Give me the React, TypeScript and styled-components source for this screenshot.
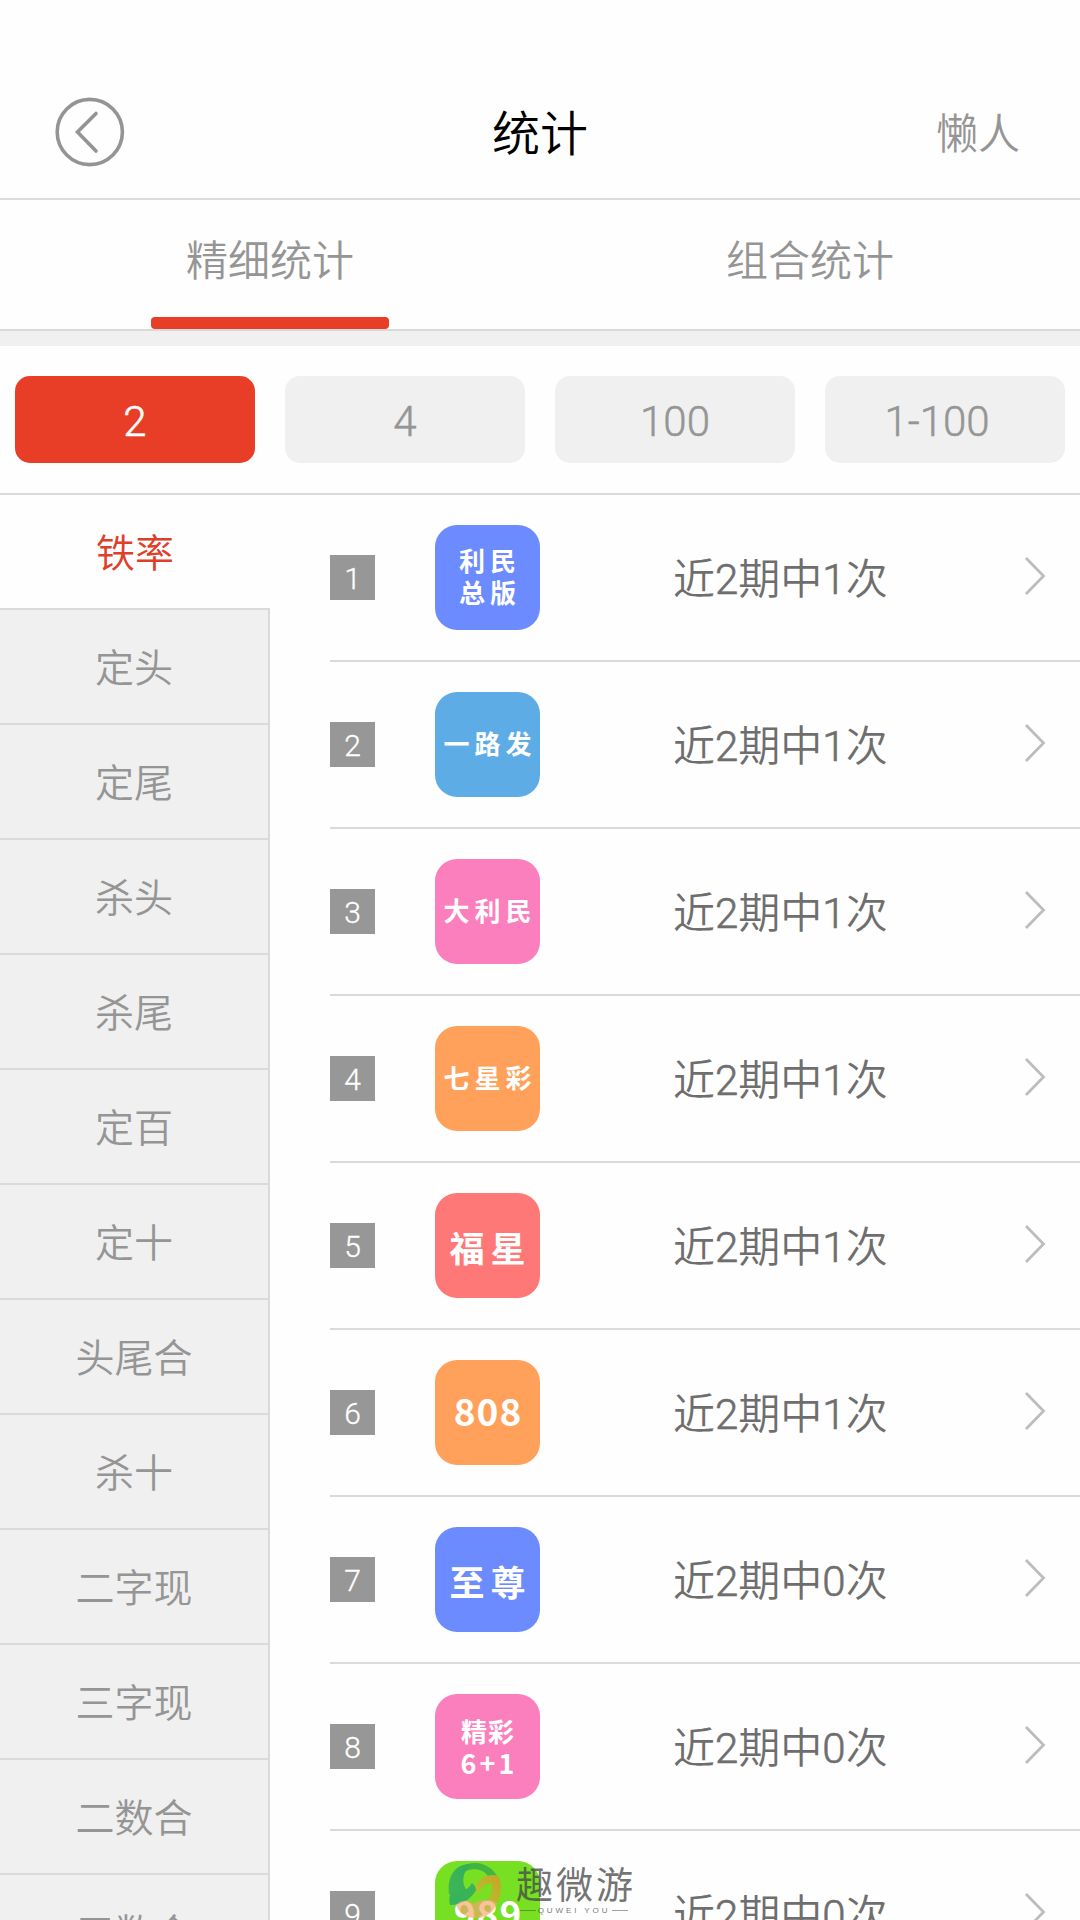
import React from "react";
import styled, { createGlobalStyle } from "styled-components";

const GlobalStyle = createGlobalStyle`
  * { box-sizing: border-box; }
  html, body { margin: 0; padding: 0; background: #fefefe; }
  body { overflow: hidden; font-family: Roboto, "Noto Sans CJK SC", sans-serif; font-weight: 350; }
  button { font: inherit; border: 0; padding: 0; background: none; }
  svg { display: block; }
`;

const Screen = styled.div`
  position: relative;
  display: flex;
  flex-direction: column;
  width: 1080px;
  height: 1920px;
  overflow: hidden;
  background: #fefefe;
`;

const Header = styled.header`
  display: grid;
  grid-template-columns: 1fr auto 1fr;
  align-items: center;
  height: 200px;
  padding: 66px 60px 0;
  border-bottom: 2px solid #dadada;
`;

const BackButton = styled.button`
  justify-self: start;
  width: 72px;
  height: 72px;
  margin-left: -6px;
`;

const Title = styled.h1`
  margin: 0;
  padding-top: 5px;
  font-size: 48px;
  line-height: 72px;
  font-weight: 350;
  color: #000;
`;

const HeaderLink = styled.button`
  justify-self: end;
  padding-top: 5px;
  font-size: 42px;
  line-height: 60px;
  color: #959595;
`;

const Tabs = styled.nav`
  display: flex;
  height: 131px;
  border-bottom: 2px solid #dadada;
`;

const Tab = styled.button`
  flex: 1;
  display: flex;
  flex-direction: column;
  align-items: center;
  justify-content: space-between;
  padding-top: 32px;
  font-size: 42px;
  line-height: 60px;
  color: #959595;
`;

const TabBar = styled.span<{ $on: boolean }>`
  width: 238px;
  height: 12px;
  border-radius: 4px;
  background: ${(p) => (p.$on ? "#e83d26" : "transparent")};
`;

const Band = styled.div`
  height: 15px;
  background: #f0f0f0;
`;

const Periods = styled.div`
  display: grid;
  grid-template-columns: repeat(4, 240px);
  gap: 30px;
  height: 149px;
  padding: 30px 15px;
  border-bottom: 2px solid #dadada;
`;

const Period = styled.button<{ $on: boolean; $shift: number }>`
  height: 87px;
  border-radius: 15px;
  font-size: 42px;
  line-height: 83px;
  padding: 4px ${(p) => p.$shift}px 0 0;
  color: ${(p) => (p.$on ? "#fff" : "#959595")};
  background: ${(p) => (p.$on ? "#e83d26" : "#f0f0f0")};
  -webkit-text-stroke: 0.5px currentColor;
`;

const Body = styled.main`
  display: flex;
  flex: 1;
  min-height: 0;
  overflow: hidden;
`;

const Sidebar = styled.aside`
  flex: 0 0 270px;
`;

const Category = styled.div<{ $on: boolean }>`
  height: 115px;
  padding-top: 2px;
  border-bottom: 2px solid #dadada;
  border-right: ${(p) => (p.$on ? "0" : "2px solid #dadada")};
  background: ${(p) => (p.$on ? "#fefefe" : "#f0f0f0")};
  color: ${(p) => (p.$on ? "#dd3f2a" : "#959595")};
  font-size: 39px;
  line-height: 115px;
  text-align: center;
`;

const List = styled.section`
  flex: 1;
  padding-left: 60px;
`;

const Row = styled.div`
  display: flex;
  align-items: center;
  height: 167px;
  border-bottom: 2px solid #dadada;
`;

const Rank = styled.span`
  width: 45px;
  height: 45px;
  background: #979797;
  color: #fff;
  font-size: 30px;
  line-height: 48px;
  text-align: center;
  -webkit-text-stroke: 0.3px currentColor;
`;

const Tile = styled.div<{ $color: string; $lift: number }>`
  display: flex;
  flex-direction: column;
  align-items: center;
  justify-content: center;
  width: 105px;
  height: 105px;
  margin-left: 60px;
  padding-top: ${(p) => Math.max(0, -p.$lift)}px;
  padding-bottom: ${(p) => Math.max(0, p.$lift)}px;
  border-radius: 22px;
  background: ${(p) => p.$color};
  color: #fff;
  font-family: "Noto Sans CJK SC", sans-serif;
  font-weight: 700;
`;

const TileText = styled.span<{ $size: number; $gap: number }>`
  margin-right: -${(p) => p.$gap}px;
  white-space: pre;
  font-size: ${(p) => p.$size}px;
  line-height: ${(p) => (p.$size > 30 ? 46 : 32)}px;
  letter-spacing: ${(p) => p.$gap}px;
`;

const Result = styled.div`
  width: 216px;
  margin-left: 133px;
  padding-top: 5px;
  white-space: nowrap;
  font-size: 42px;
  line-height: 60px;
  color: #6e6e6e;
`;

const Count = styled.span`
  -webkit-text-stroke: 0.6px currentColor;
`;

const Chevron = styled.svg`
  margin: 0 34px 3px auto;
`;

const Watermark = styled.div`
  position: absolute;
  left: 448px;
  top: 1863px;
  display: flex;
`;

const Brand = styled.div`
  display: flex;
  flex-direction: column;
  margin-left: 14px;
  color: rgba(70, 70, 70, 0.75);
`;

const BrandName = styled.span`
  padding-top: 3px;
  font-size: 37px;
  line-height: 41px;
  letter-spacing: 3px;
  font-weight: 400;
`;

const BrandSub = styled.span`
  display: flex;
  align-items: center;
  gap: 2px;
  width: 108px;
  margin-top: -1px;
  margin-left: 4px;
  font-family: "Liberation Sans", sans-serif;
  font-size: 8px;
  line-height: 9px;
  letter-spacing: 2.9px;
  white-space: nowrap;
  &::before, &::after { content: ""; flex: 1; height: 1px; background: rgba(70, 70, 70, 0.5); }
`;

type Line = { text: string; size: number; gap: number };
type Lottery = { color: string; lines: Line[]; lift: number; hits: number };

const small = (text: string): Line => ({ text, size: 26, gap: 5 });
const large = (text: string): Line => ({ text, size: 35, gap: 6 });
const digits = (text: string): Line => ({ text, size: 37, gap: 1 });

const lotteries: Lottery[] = [
  { color: "#6c8bff", lines: [small("利民"), small("总版")], lift: 4, hits: 1 },
  { color: "#5eace5", lines: [small("一路发")], lift: 3, hits: 1 },
  { color: "#fb7fbd", lines: [small("大利民")], lift: 3, hits: 1 },
  { color: "#ffa15a", lines: [small("七星彩")], lift: 3, hits: 1 },
  { color: "#ff7878", lines: [large("福星")], lift: -2, hits: 1 },
  { color: "#ffa15a", lines: [digits("808")], lift: 5, hits: 1 },
  { color: "#6c8bff", lines: [large("至尊")], lift: -2, hits: 0 },
  {
    color: "#fb7fbd",
    lines: [{ text: "精彩", size: 26, gap: 1 }, { text: "6+1", size: 27, gap: 3 }],
    lift: 0,
    hits: 0,
  },
  { color: "#77e022", lines: [digits("989")], lift: 3, hits: 0 },
];

const categories = ["铁率", "定头", "定尾", "杀头", "杀尾", "定百", "定十", "头尾合", "杀十", "二字现", "三字现", "二数合", "三数合"];
const periods = ["2", "4", "100", "1-100"];
const tabs = ["精细统计", "组合统计"];

function BrandLogo() {
  return (
    <svg width="54" height="57" viewBox="0 0 54 57">
      <defs>
        <linearGradient id="leaf" x1="0" y1="1" x2="1" y2="0">
          <stop offset="0" stopColor="#38b45c" />
          <stop offset="1" stopColor="#2aa566" />
        </linearGradient>
        <linearGradient id="sun" x1="0" y1="1" x2="1" y2="0">
          <stop offset="0" stopColor="#b9c42c" />
          <stop offset="1" stopColor="#d69a2c" />
        </linearGradient>
      </defs>
      <g opacity="0.88">
        <path d="M15 3 C28 -4 43 2 49 13 C46 12 43 12 40 13 C36 7 27 4 18 8 Z" fill="#3cae46" />
        <path d="M24 1 C8 0 -1 12 1 31 C5 34 9 35 12 34 L19 28 C13 20 14 9 24 1 Z" fill="url(#leaf)" />
        <path d="M4 29 C12 31 20 27 24 20 L29 25 C24 36 14 42 2 42 C1 37 1 33 4 29 Z" fill="#2fae62" />
        <path d="M27 24 C31 15 40 10 50 13 C55 22 53 34 48 41 C45 39 42 37 40 36 C44 31 45 25 43 20 C37 21 32 25 30 32 Z" fill="url(#sun)" />
        <path d="M8 42 C13 37 20 36 25 41 C32 36 42 35 49 40 C46 51 35 56 25 55 C17 54 11 50 8 42 Z" fill="#f5a56e" fillOpacity="0.75" />
      </g>
    </svg>
  );
}

export default function App() {
  return (
    <Screen>
      <GlobalStyle />
      <Header>
        <BackButton aria-label="返回">
          <svg width="72" height="72" viewBox="0 0 72 72" fill="none" stroke="#949494" strokeWidth="3.6">
            <circle cx="35.8" cy="36" r="32.6" />
            <path d="M42 17.5 L23.5 36 L42 55" strokeLinecap="round" />
          </svg>
        </BackButton>
        <Title>统计</Title>
        <HeaderLink>懒人</HeaderLink>
      </Header>
      <Tabs>
        {tabs.map((t, i) => (
          <Tab key={t}>
            {t}
            <TabBar $on={i === 0} />
          </Tab>
        ))}
      </Tabs>
      <Band />
      <Periods>
        {periods.map((p, i) => (
          <Period key={p} $on={i === 0} $shift={i === 3 ? 16 : 0}>{p}</Period>
        ))}
      </Periods>
      <Body>
        <Sidebar>
          {categories.map((c, i) => (
            <Category key={c} $on={i === 0}>{c}</Category>
          ))}
        </Sidebar>
        <List>
          {lotteries.map((l, i) => (
            <Row key={i}>
              <Rank>{i + 1}</Rank>
              <Tile $color={l.color} $lift={l.lift}>
                {l.lines.map((s) => (
                  <TileText key={s.text} $size={s.size} $gap={s.gap}>{s.text}</TileText>
                ))}
              </Tile>
              <Result>
                近<Count>2</Count>期中<Count>{l.hits}</Count>次
              </Result>
              <Chevron width="22" height="40" viewBox="0 0 22 40" fill="none" stroke="#bdbdbd" strokeWidth="2.8">
                <path d="M2 2 L19.5 20 L2 38" />
              </Chevron>
            </Row>
          ))}
        </List>
      </Body>
      <Watermark>
        <BrandLogo />
        <Brand>
          <BrandName>趣微游</BrandName>
          <BrandSub>QUWEI YOU</BrandSub>
        </Brand>
      </Watermark>
    </Screen>
  );
}
